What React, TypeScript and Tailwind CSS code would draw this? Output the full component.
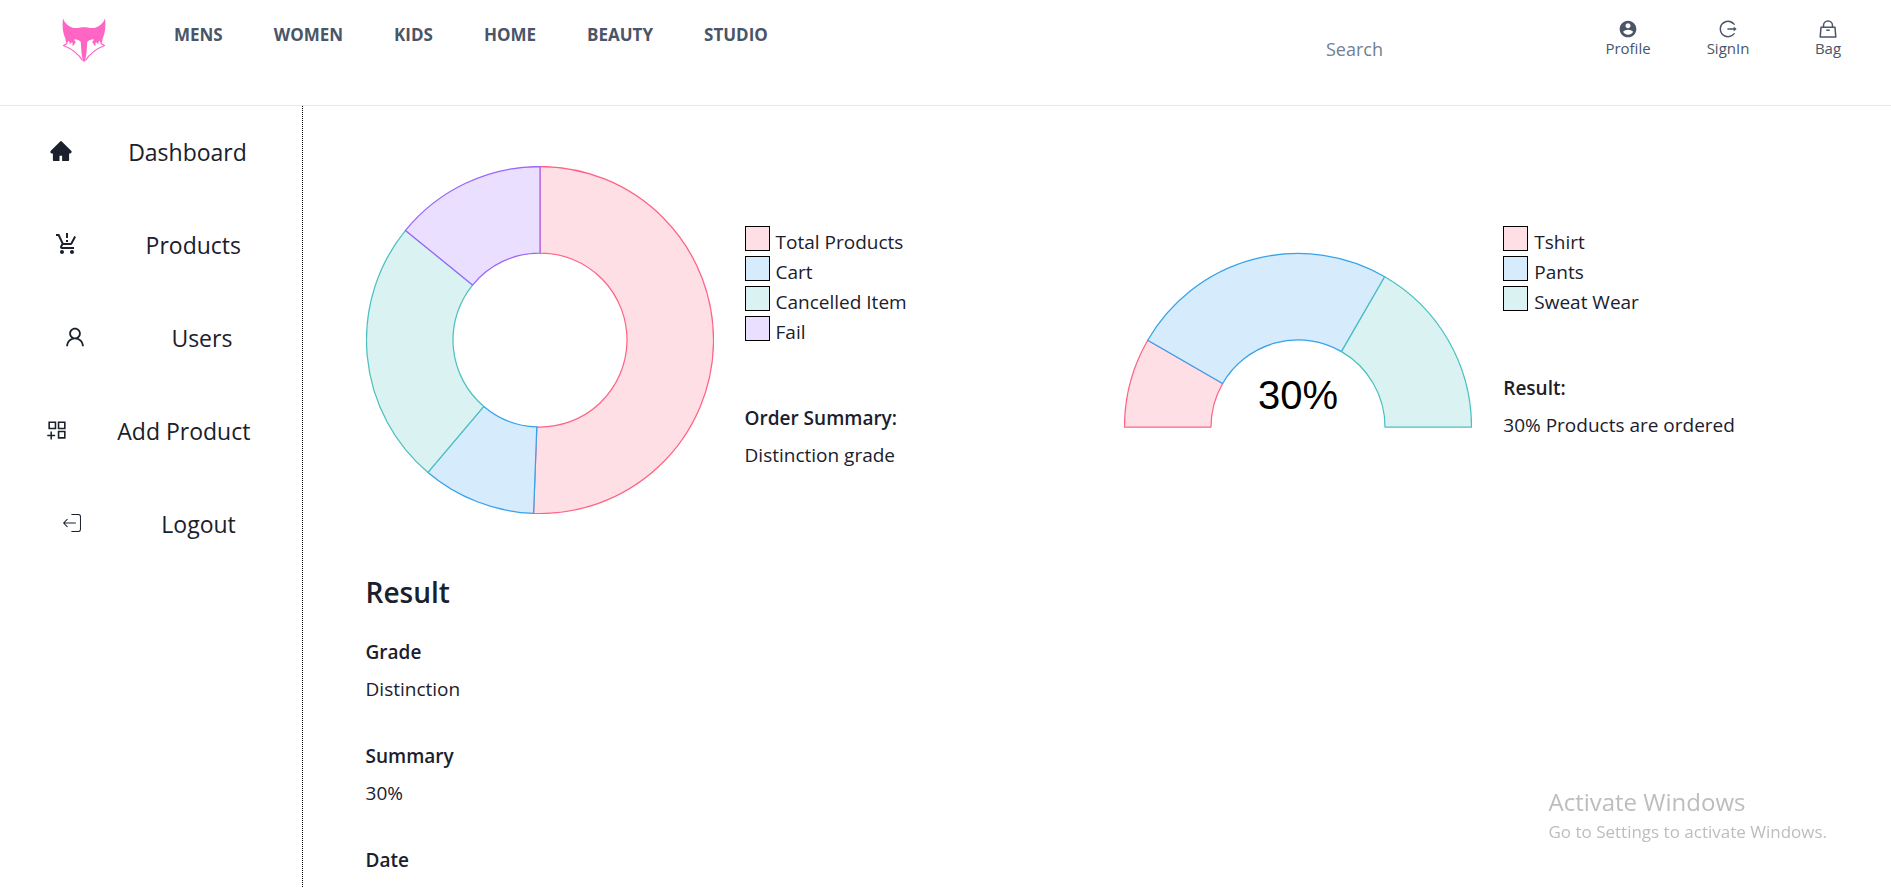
import React from "react";
import { AiFillHome, AiOutlineUser, AiOutlineAppstoreAdd, AiOutlineLogout } from "react-icons/ai";
import { MdOutlineProductionQuantityLimits } from "react-icons/md";
import { CiLogout } from "react-icons/ci";
import { RiAccountCircleFill } from "react-icons/ri";
import type { IconType } from "react-icons";

const PALETTE = {
  pink: { fill: "#ffdfe6", stroke: "#ff6384" },
  blue: { fill: "#d6ebfb", stroke: "#36a2eb" },
  teal: { fill: "#daf2f2", stroke: "#4bc0c0" },
  purple: { fill: "#ebdfff", stroke: "#9966ff" },
};

type Tone = keyof typeof PALETTE;
type Slice = { label: string; value: number; tone: Tone };

const orders: Slice[] = [
  { label: "Total Products", value: 43, tone: "pink" },
  { label: "Cart", value: 9, tone: "blue" },
  { label: "Cancelled Item", value: 21, tone: "teal" },
  { label: "Fail", value: 12, tone: "purple" },
];

const clothes: Slice[] = [
  { label: "Tshirt", value: 3, tone: "pink" },
  { label: "Pants", value: 9, tone: "blue" },
  { label: "Sweat Wear", value: 6, tone: "teal" },
];

type RingShape = { cy: number; start: number; sweep: number };

function point(cy: number, r: number, deg: number) {
  const a = ((deg - 90) * Math.PI) / 180;
  return `${(174 + r * Math.cos(a)).toFixed(2)} ${(cy + r * Math.sin(a)).toFixed(2)}`;
}

function ring(cy: number, from: number, to: number, outer = 173.5, inner = 87) {
  const large = to - from > 180 ? 1 : 0;
  return `M${point(cy, outer, from)}A${outer} ${outer} 0 ${large} 1 ${point(cy, outer, to)}L${point(cy, inner, to)}A${inner} ${inner} 0 ${large} 0 ${point(cy, inner, from)}Z`;
}

function Doughnut({ slices, shape, label, title }: { slices: Slice[]; shape: RingShape; label?: string; title: string }) {
  const total = slices.reduce((sum, s) => sum + s.value, 0);
  let angle = shape.start;
  return (
    <svg viewBox="0 0 348 348" className="w-[348px] shrink-0" role="img" aria-label={title}>
      {slices.map((s) => {
        const from = angle;
        angle += (s.value / total) * shape.sweep;
        return (
          <path
            key={s.label}
            d={ring(shape.cy, from, angle)}
            fill={PALETTE[s.tone].fill}
            stroke={PALETTE[s.tone].stroke}
            strokeWidth="1.25"
            strokeLinejoin="round"
          />
        );
      })}
      {label && (
        <text x="174" y="243" textAnchor="middle" fontSize="40" className="font-['Liberation_Sans',sans-serif]" fill="#000">
          {label}
        </text>
      )}
    </svg>
  );
}

const FULL: RingShape = { cy: 174, start: 0, sweep: 360 };
const HALF: RingShape = { cy: 261, start: -90, sweep: 180 };

const SWATCH: Record<Tone, string> = {
  pink: "bg-[#ffdfe6]",
  blue: "bg-[#d6ebfb]",
  teal: "bg-[#daf2f2]",
  purple: "bg-[#ebdfff]",
};

function Legend({ slices }: { slices: Slice[] }) {
  return (
    <ul>
      {slices.map((s) => (
        <li key={s.label} className="flex h-[30px] gap-1.5">
          <span className={`size-[25px] border border-black ${SWATCH[s.tone]}`} />
          <span className="leading-8">{s.label}</span>
        </li>
      ))}
    </ul>
  );
}

function Fact({ term, value }: { term: string; value?: string }) {
  return (
    <div>
      <h3 className="font-semibold leading-[30px]">{term}</h3>
      {value && <p className="mt-[7px] leading-[30px]">{value}</p>}
    </div>
  );
}

function FoxLogo() {
  return (
    <svg viewBox="0 0 44 45" className="w-11" aria-hidden="true">
      <path
        fill="#ff66c4"
        d="M1 .5C3 5.500 6.500 8.600 11 9.800c3 .6 7-.6 11-.6s8 1.200 11 .6C37.500 8.600 41 5.500 43 .5c.9 7 .5 14-2.500 20.500L38.800 24.500 37 22.800 36.200 26 33.800 24l-.6 4.500-3-4.500c.9-.8 1.400-1.700 1.600-2.700-2.800.1-5 .9-6.500 2.500l-.9 12.200-1.200 6.500L22 44.300l-1.200-1.800-1.200-6.500-.9-12.200c-1.500-1.600-3.700-2.400-6.500-2.500.2 1 .7 1.900 1.600 2.700l-3 4.500-.6-4.500L7.800 26 7 22.800 5.200 24.500 3.500 21C.5 14.500.1 7.500 1 .5Z"
      />
      <path
        fill="none"
        stroke="#ff66c4"
        strokeWidth="1.200"
        strokeLinejoin="round"
        d="M4 21.500 5 25.500 1.500 27.500c7.500 3 14.500 7.500 19 15M40 21.500 39 25.500 42.500 27.500c-7.500 3-14.500 7.500-19 15"
      />
    </svg>
  );
}

function BagIcon() {
  return (
    <svg viewBox="0 0 20 20" className="size-5" fill="none" stroke="currentColor" strokeWidth="1.500" aria-hidden="true">
      <path d="M3 8.200h14l.8 9.800H2.200Z" strokeLinejoin="round" />
      <path d="M5.500 8V6.500a4.500 4.500 0 0 1 9 0V8M8.300 11.200h3.400" />
    </svg>
  );
}

const links = ["MENS", "WOMEN", "KIDS", "HOME", "BEAUTY", "STUDIO"];

const menu: { label: string; Icon: IconType }[] = [
  { label: "Dashboard", Icon: AiFillHome },
  { label: "Products", Icon: MdOutlineProductionQuantityLimits },
  { label: "Users", Icon: AiOutlineUser },
  { label: "Add Product", Icon: AiOutlineAppstoreAdd },
  { label: "Logout", Icon: CiLogout },
];

function Action({ label, children }: { label: string; children: React.ReactNode }) {
  return (
    <a href="#" className="flex w-[100px] flex-col items-center text-[15px] font-medium leading-[19px]">
      {children}
      {label}
    </a>
  );
}

export default function App() {
  return (
    <div className="flex h-screen flex-col overflow-hidden bg-white font-['Open_Sans','Noto_Sans',sans-serif] text-[19px] text-[#1a202c]">
      <header className="flex h-[106px] shrink-0 items-start border-b border-[#e2e8f0] pl-[62px] pr-[13px] text-[#4a5568]">
        <a href="#" aria-label="Home" className="mt-[18px]">
          <FoxLogo />
        </a>
        <nav className="ml-[68px] mt-[23px] flex gap-[51px] text-[17px] font-bold leading-6">
          {links.map((l) => (
            <a key={l} href="#">
              {l}
            </a>
          ))}
        </nav>
        <input
          type="text"
          aria-label="Search"
          placeholder="Search"
          className="ml-auto mr-4 mt-[29px] h-10 w-[236px] bg-transparent text-lg outline-none placeholder:text-[#718096]"
        />
        <div className="mt-[19px] flex">
          <Action label="Profile">
            <RiAccountCircleFill className="size-5" />
          </Action>
          <Action label="SignIn">
            <AiOutlineLogout className="size-5" />
          </Action>
          <Action label="Bag">
            <BagIcon />
          </Action>
        </div>
      </header>

      <div className="flex min-h-0 flex-1">
        <aside className="w-[16%] shrink-0 border-r border-dotted border-black pl-[21px] pr-[27px] pt-7">
          <ul className="flex flex-col gap-[57px] text-[23px] leading-9">
            {menu.map(({ label, Icon }) => (
              <li key={label}>
                <a href="#" className="flex justify-around">
                  <Icon className="mt-[5px] size-6" />
                  {label}
                </a>
              </li>
            ))}
          </ul>
        </aside>

        <main className="min-w-0 flex-1 overflow-hidden pl-[63px] pr-2 pt-[60px]">
          <div className="flex">
            <section className="flex w-1/2 gap-[31px]">
              <Doughnut slices={orders} shape={FULL} title="Orders" />
              <div className="flex flex-col gap-[57px] pt-[60px]">
                <Legend slices={orders} />
                <Fact term="Order Summary:" value="Distinction grade" />
              </div>
            </section>
            <section className="flex w-1/2 gap-[31px]">
              <Doughnut slices={clothes} shape={HALF} label="30%" title="Clothes" />
              <div className="flex flex-col gap-[57px] pt-[60px]">
                <Legend slices={clothes} />
                <Fact term="Result:" value="30% Products are ordered" />
              </div>
            </section>
          </div>
          <section className="mt-[58px]">
            <h2 className="text-[28px] font-semibold leading-10">Result</h2>
            <div className="mt-[25px] flex flex-col gap-[37px]">
              <Fact term="Grade" value="Distinction" />
              <Fact term="Summary" value="30%" />
              <Fact term="Date" />
            </div>
          </section>
        </main>
      </div>

      <div className="pointer-events-none fixed bottom-[43px] right-16 text-[#bdbdbd]">
        <p className="text-2xl leading-9">Activate Windows</p>
        <p className="text-[17px] leading-6">Go to Settings to activate Windows.</p>
      </div>
    </div>
  );
}
